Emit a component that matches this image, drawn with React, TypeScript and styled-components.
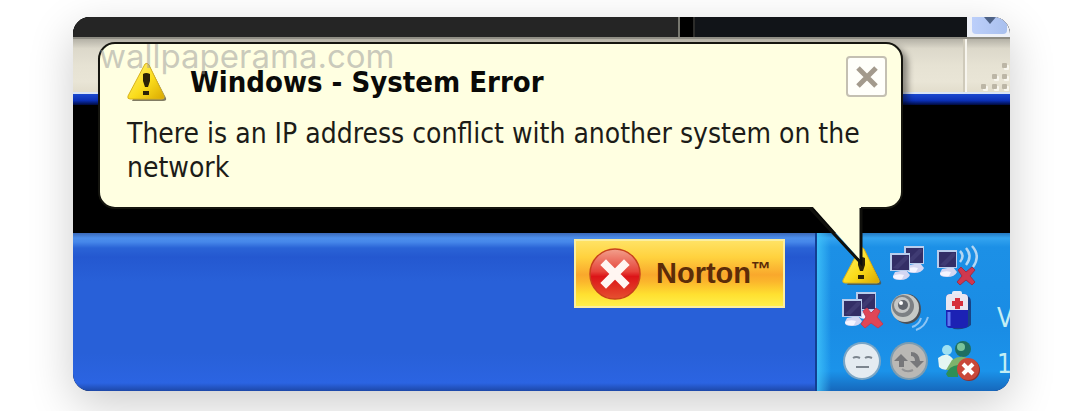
import React from 'react';
import styled, { createGlobalStyle } from 'styled-components';

const GlobalStyle = createGlobalStyle`
  * { box-sizing: border-box; }
  body {
    margin: 0;
    background: #fff;
    font-family: 'DejaVu Sans Condensed', 'DejaVu Sans', Tahoma, sans-serif;
    overflow: hidden;
  }
`;

const Page = styled.main`
  padding: 17px 70px 20px 73px;
`;

const Frame = styled.section`
  position: relative;
  display: flex;
  flex-direction: column;
  overflow: hidden;
  border-radius: 17px;
  background: #000;
`;

const Shadow = styled.div`
  border-radius: 17px;
  box-shadow: 0 14px 46px rgba(0, 0, 0, 0.2);
`;

const WindowEdge = styled.div`
  display: flex;
  height: 20px;
  background: #000;
`;

const Pane = styled.div<{ $grow: number; $color: string }>`
  flex: ${(p) => p.$grow} 1 0;
  background: ${(p) => p.$color};
`;

const Divider = styled.div`
  width: 17px;
  background: #000;
  border-left: 2px solid #77776f;
  border-right: 2px solid #2c2c2a;
`;

const ScrollTrack = styled.div`
  display: flex;
  justify-content: center;
  width: 43px;
  padding: 0 3px 3px 5px;
  background: #eef1f8;
`;

const ScrollButton = styled.button`
  display: flex;
  flex: 1;
  align-items: flex-start;
  justify-content: center;
  padding: 0;
  border: 0;
  border-radius: 0 0 4px 4px;
  background: linear-gradient(90deg, #bccffa, #a9c0ee);
`;

const StatusBar = styled.div`
  display: flex;
  justify-content: flex-end;
  height: 57px;
  border-top: 2px solid #8f8d84;
  border-bottom: 2px solid #d9e4f4;
  background: linear-gradient(#b4b1a6, #dcd8ca 18%, #e6e2d3 50%, #e9e5d6 80%, #e2ddcc);
`;

const GripCell = styled.div`
  display: flex;
  align-items: flex-end;
  justify-content: flex-end;
  width: 45px;
  border-left: 2px solid #f7f5ee;
  box-shadow: -2px 0 0 #cfcaba;
`;

const WindowBorder = styled.div`
  height: 11px;
  background: linear-gradient(#1a48cf, #0a2fb4 60%, #000a3c);
`;

const Desktop = styled.div`
  height: 128px;
  background: #000;
`;

const Taskbar = styled.footer`
  display: flex;
  align-items: stretch;
  justify-content: flex-end;
  height: 158px;
  background: linear-gradient(
    #3a68b8 0,
    #4c8eec 5px,
    #4687ea 9px,
    #2a63d6 15px,
    #2458d0 24px,
    #2860d8 48px,
    #2860d8 120px,
    #2b64e2 150px,
    #1d48a8 158px
  );
`;

const NortonButton = styled.button`
  display: flex;
  align-items: center;
  gap: 15px;
  width: 211px;
  height: 69px;
  margin: 6px 30px 0 0;
  padding: 0 0 0 13px;
  border: 2px solid #fbeea0;
  background: linear-gradient(#ffe264, #ffd23e 25%, #f9a82c 52%, #fbb52c 62%, #ffe030 82%, #fff04a);
  color: #5c2c08;
  font: bold 29px 'Liberation Sans', Arial, sans-serif;
`;

const NortonLabel = styled.span`
  display: flex;
  align-items: flex-start;
`;

const Trademark = styled.span`
  font-size: 20px;
  line-height: 24px;
`;

const Tray = styled.div`
  display: flex;
  width: 195px;
  padding: 11px 0 8px 19px;
  gap: 17px;
  overflow: hidden;
  border-left: 2px solid #123f92;
  background:
    linear-gradient(90deg, rgba(64, 196, 250, 0.85), rgba(40, 160, 240, 0) 14px),
    linear-gradient(#2478c0 0, #34a4f0 5px, #1c90e6 14px, #1a8ce4 90px, #1b93ea 138px, #1668bc 158px);
`;

const TrayIcons = styled.div`
  display: grid;
  flex: none;
  grid-template-columns: repeat(3, 48px);
  grid-template-rows: repeat(3, 46px);
`;

const Clock = styled.div`
  display: flex;
  flex-direction: column;
  width: 16px;
  flex: none;
  padding-top: 51px;
  color: #c4eef4;
  font-size: 26px;
  line-height: 46px;
  white-space: nowrap;
`;

const Balloon = styled.section`
  position: absolute;
  top: 25px;
  left: 25px;
  right: 107px;
  height: 167px;
  padding: 21px 14px 16px 27px;
  border: 2px solid #15150f;
  border-radius: 17px;
  background: #ffffe1;
  color: #1c1c18;
  box-shadow: 5px 5px 6px rgba(0, 0, 0, 0.4);
`;

const BalloonHeader = styled.header`
  display: flex;
  align-items: center;
  height: 34px;
`;

const Title = styled.h1`
  flex: 1;
  margin: 0 0 0 23px;
  color: #0a0a08;
  font-size: 29px;
  font-weight: bold;
  line-height: 34px;
`;

const CloseButton = styled.button`
  align-self: flex-end;
  width: 41px;
  height: 41px;
  margin-bottom: 2px;
  padding: 0;
  border: 2px solid #c4c0b2;
  border-radius: 4px;
  background: #fffffa;
  line-height: 0;
`;

const Message = styled.p`
  margin: 18px 0 0;
  font-size: 28px;
  line-height: 34px;
`;

const Watermark = styled.span`
  position: absolute;
  top: 19px;
  left: 26px;
  color: rgba(150, 150, 150, 0.5);
  font: 33px/40px Inter, 'Liberation Sans', sans-serif;
  pointer-events: none;
`;

const Pointer = styled.svg`
  position: absolute;
  right: 36px;
  top: 162px;
  width: 56px;
  height: 62px;
`;

const WarningIcon = ({ size }: { size: number }) => (
  <svg width={size} height={size} viewBox="0 0 40 40" aria-hidden="true">
    <defs>
      <linearGradient id="warn" x1="0" x2="1" y1="0" y2="1">
        <stop offset="0" stopColor="#fff27a" />
        <stop offset="0.55" stopColor="#fbdc1c" />
        <stop offset="1" stopColor="#d9a800" />
      </linearGradient>
    </defs>
    <path d="M22 3 L39 36 Q40 39 36 39 H5 Z" fill="#57503a" opacity="0.75" />
    <path d="M18 2 Q20 0 22 3 L37 34 Q38 37 35 37 H3 Q0 37 1 34 Z" fill="url(#warn)" stroke="#d8b21c" />
    <path d="M16 12 Q19 10 23 12 V19 L21 25 H18 L16 19 Z M16 29 H22 V33 H16 Z" fill="#2b2206" />
  </svg>
);

const Monitor = ({ x, y }: { x: number; y: number }) => (
  <g transform={`translate(${x} ${y})`}>
    <path d="M5 19 L16 17 L20 22 Q18 27 10 27 Q2 27 3 23 Z" fill="#d3d6f2" />
    <path d="M3 23 Q8 20 14 22 L12 26 Q4 27 3 23 Z" fill="#f4f4ff" />
    <rect width="20" height="18" fill="#b9cdec" />
    <rect x="2" y="2" width="17" height="15" fill="#332e66" />
    <path d="M3 15 L15 3 H18 V6 L8 16 Z" fill="#4c477f" opacity="0.5" />
  </g>
);

const RedCross = ({ x, y }: { x: number; y: number }) => (
  <path
    transform={`translate(${x} ${y})`}
    d="M1 3 L4 0 L9 5 L15 0 L18 3 L13 9 L18 15 L15 18 L9 13 L3 18 L0 15 L5 9 Z"
    fill="#d0384e"
    stroke="#96304e"
  />
);

const TraySvg = ({ children, label }: { children: React.ReactNode; label: string }) => (
  <svg width="48" height="46" viewBox="0 0 48 46" role="img" aria-label={label}>
    {children}
  </svg>
);

const NetworkIcon = () => (
  <TraySvg label="Network">
    <Monitor x={20} y={2} />
    <Monitor x={6} y={9} />
  </TraySvg>
);

const WirelessIcon = () => (
  <TraySvg label="Wireless disconnected">
    <Monitor x={5} y={6} />
    <g fill="none" stroke="#b4d6f2" strokeWidth="2.500">
      <path d="M28 7 Q33 12 28 18" />
      <path d="M34 4 Q41 12 34 21" />
      <path d="M40 2 Q49 12 41 23" />
    </g>
    <RedCross x={25} y={23} />
  </TraySvg>
);

const LanIcon = () => (
  <TraySvg label="Network disconnected">
    <Monitor x={20} y={2} />
    <Monitor x={6} y={9} />
    <g transform="translate(26 18)">
      <path d="M1 3 L5 0 L9 5 L14 0 L18 3 L15 9 L21 16 L16 20 L9 15 L3 20 L-1 16 L4 9 Z" fill="#e04656" stroke="#c33b55" />
    </g>
  </TraySvg>
);

const SpeakerIcon = () => (
  <TraySvg label="Volume">
    <ellipse cx="23" cy="19" rx="14" ry="15" fill="#4b5058" />
    <ellipse cx="21" cy="18" rx="14" ry="14" fill="#c6c9c6" />
    <ellipse cx="19" cy="16" rx="11" ry="11" fill="#7c8084" />
    <ellipse cx="18" cy="15" rx="8" ry="8" fill="#c4c6c6" />
    <circle cx="19" cy="15" r="5" fill="#62666e" />
    <circle cx="17" cy="13" r="2" fill="#fff" />
    <g fill="none" stroke="#8cc4f4" strokeWidth="2">
      <path d="M28 37 Q35 35 37 28" />
      <path d="M32 40 Q41 37 44 27" />
    </g>
  </TraySvg>
);

const BatteryIcon = () => (
  <TraySvg label="Battery">
    <path d="M16 6 H35 Q39 7 39 12 V35 Q34 40 22 39 L17 36 Z" fill="#182a66" opacity="0.75" />
    <rect x="20" y="1" width="10" height="7" rx="2" fill="#e8ecf6" />
    <rect x="14" y="4" width="22" height="34" rx="4" fill="#1c22b4" />
    <path d="M18 4 H32 Q36 4 36 8 V20 H14 V8 Q14 4 18 4 Z" fill="#e9e6f0" />
    <path d="M23 8 H28 V11 H31 V16 H28 V19 H23 V16 H20 V11 H23 Z" fill="#d6303c" />
    <path d="M17 22 V36" stroke="#5f78f0" strokeWidth="3" />
  </TraySvg>
);

const FaceIcon = () => (
  <TraySvg label="Messenger">
    <circle cx="26" cy="25" r="19" fill="#7ba6c6" />
    <circle cx="26" cy="25" r="17" fill="#e4ebf1" />
    <path d="M17 22 Q20 20 24 22 M29 22 Q32 20 36 22 M20 31 H33" fill="none" stroke="#7c858f" strokeWidth="2" />
  </TraySvg>
);

const SyncIcon = () => (
  <TraySvg label="Updates">
    <circle cx="25" cy="25" r="19" fill="#7d9cb0" />
    <circle cx="25" cy="25" r="17" fill="#bab8b5" />
    <path
      d="M10 25 L17 18 L24 25 H20 V31 H15 V25 Z M26 25 L33 32 L40 25 H36 Q35 16 27 16 V20 Q31 20 31 25 Z"
      fill="#77777a"
    />
    <path d="M18 33 Q23 37 29 34" fill="none" stroke="#929294" strokeWidth="2" />
  </TraySvg>
);

const PeopleIcon = () => (
  <TraySvg label="Users offline">
    <circle cx="15" cy="14" r="5" fill="#9fe0f2" />
    <path d="M6 22 Q15 15 21 23 L19 32 Q12 36 7 31 Z" fill="#e4f6f2" />
    <circle cx="31" cy="13" r="8" fill="#1f6f62" />
    <circle cx="29" cy="11" r="4" fill="#7ac49c" />
    <path d="M20 24 Q30 17 40 25 V34 H14 Z" fill="#7eb36c" />
    <path d="M14 38 Q17 30 26 29 V41 H16 Z" fill="#2d8f56" />
    <circle cx="37" cy="34" r="11" fill="#8c3030" />
    <circle cx="36" cy="33" r="11" fill="#c9483a" />
    <path d="M31 28 L41 38 M41 28 L31 38" stroke="#fff" strokeWidth="4" />
  </TraySvg>
);

const NortonCross = () => (
  <svg width="52" height="54" viewBox="0 0 52 54" aria-hidden="true">
    <defs>
      <linearGradient id="ball" x1="0" x2="0" y1="0" y2="1">
        <stop offset="0" stopColor="#f2a08c" />
        <stop offset="0.45" stopColor="#e6443a" />
        <stop offset="0.55" stopColor="#dc1418" />
        <stop offset="1" stopColor="#e65030" />
      </linearGradient>
    </defs>
    <circle cx="26" cy="27" r="25" fill="url(#ball)" stroke="#c8401c" strokeWidth="1.500" />
    <path d="M17 18 L35 36 M35 18 L17 36" stroke="#fff6f2" strokeWidth="8" strokeLinecap="square" />
  </svg>
);

const gripDots = [[22, 1], [12, 12], [22, 12], [1, 22], [12, 22], [22, 22]];

export default function App() {
  return (
    <>
      <GlobalStyle />
      <Page>
        <Shadow>
          <Frame>
            <WindowEdge>
              <Pane $grow={605} $color="#252525" />
              <Divider />
              <Pane $grow={272} $color="#111418" />
              <ScrollTrack>
                <ScrollButton aria-label="Scroll down">
                  <svg width="14" height="8" viewBox="0 0 14 8">
                    <path d="M1 0 H13 L7 7 Z" fill="#4d6185" />
                  </svg>
                </ScrollButton>
              </ScrollTrack>
            </WindowEdge>
            <StatusBar>
              <GripCell>
                <svg width="30" height="30" viewBox="0 0 30 30" aria-hidden="true">
                  {gripDots.map(([x, y]) => (
                    <g key={`${x}-${y}`}>
                      <rect x={x + 2} y={y + 2} width="5" height="5" rx="1" fill="#f8f6ee" />
                      <rect x={x} y={y} width="5" height="5" rx="1" fill="#bcb6a6" />
                    </g>
                  ))}
                </svg>
              </GripCell>
            </StatusBar>
            <WindowBorder />
            <Desktop />
            <Taskbar>
              <NortonButton>
                <NortonCross />
                <NortonLabel>
                  Norton<Trademark>™</Trademark>
                </NortonLabel>
              </NortonButton>
              <Tray>
                <TrayIcons>
                  <TraySvg label="Warning">
                    <g transform="translate(6 2)">
                      <WarningIcon size={40} />
                    </g>
                  </TraySvg>
                  <NetworkIcon />
                  <WirelessIcon />
                  <LanIcon />
                  <SpeakerIcon />
                  <BatteryIcon />
                  <FaceIcon />
                  <SyncIcon />
                  <PeopleIcon />
                </TrayIcons>
                <Clock>
                  <span>V</span>
                  <span>1</span>
                </Clock>
              </Tray>
            </Taskbar>
            <Balloon role="alert">
              <BalloonHeader>
                <WarningIcon size={40} />
                <Title>Windows - System Error</Title>
                <CloseButton aria-label="Close">
                  <svg width="24" height="24" viewBox="0 0 24 24">
                    <path d="M3 3 L21 21 M21 3 L3 21" stroke="#a39a8c" strokeWidth="5" />
                  </svg>
                </CloseButton>
              </BalloonHeader>
              <Message>There is an IP address conflict with another system on the network</Message>
              <Pointer viewBox="0 0 56 62" aria-hidden="true">
                <path d="M3 0 L52 55 V0 Z" fill="#ffffe1" />
                <path d="M1 2 L52 57 V2" fill="none" stroke="#10100c" strokeWidth="3" />
              </Pointer>
            </Balloon>
            <Watermark>wallpaperama.com</Watermark>
          </Frame>
        </Shadow>
      </Page>
    </>
  );
}
